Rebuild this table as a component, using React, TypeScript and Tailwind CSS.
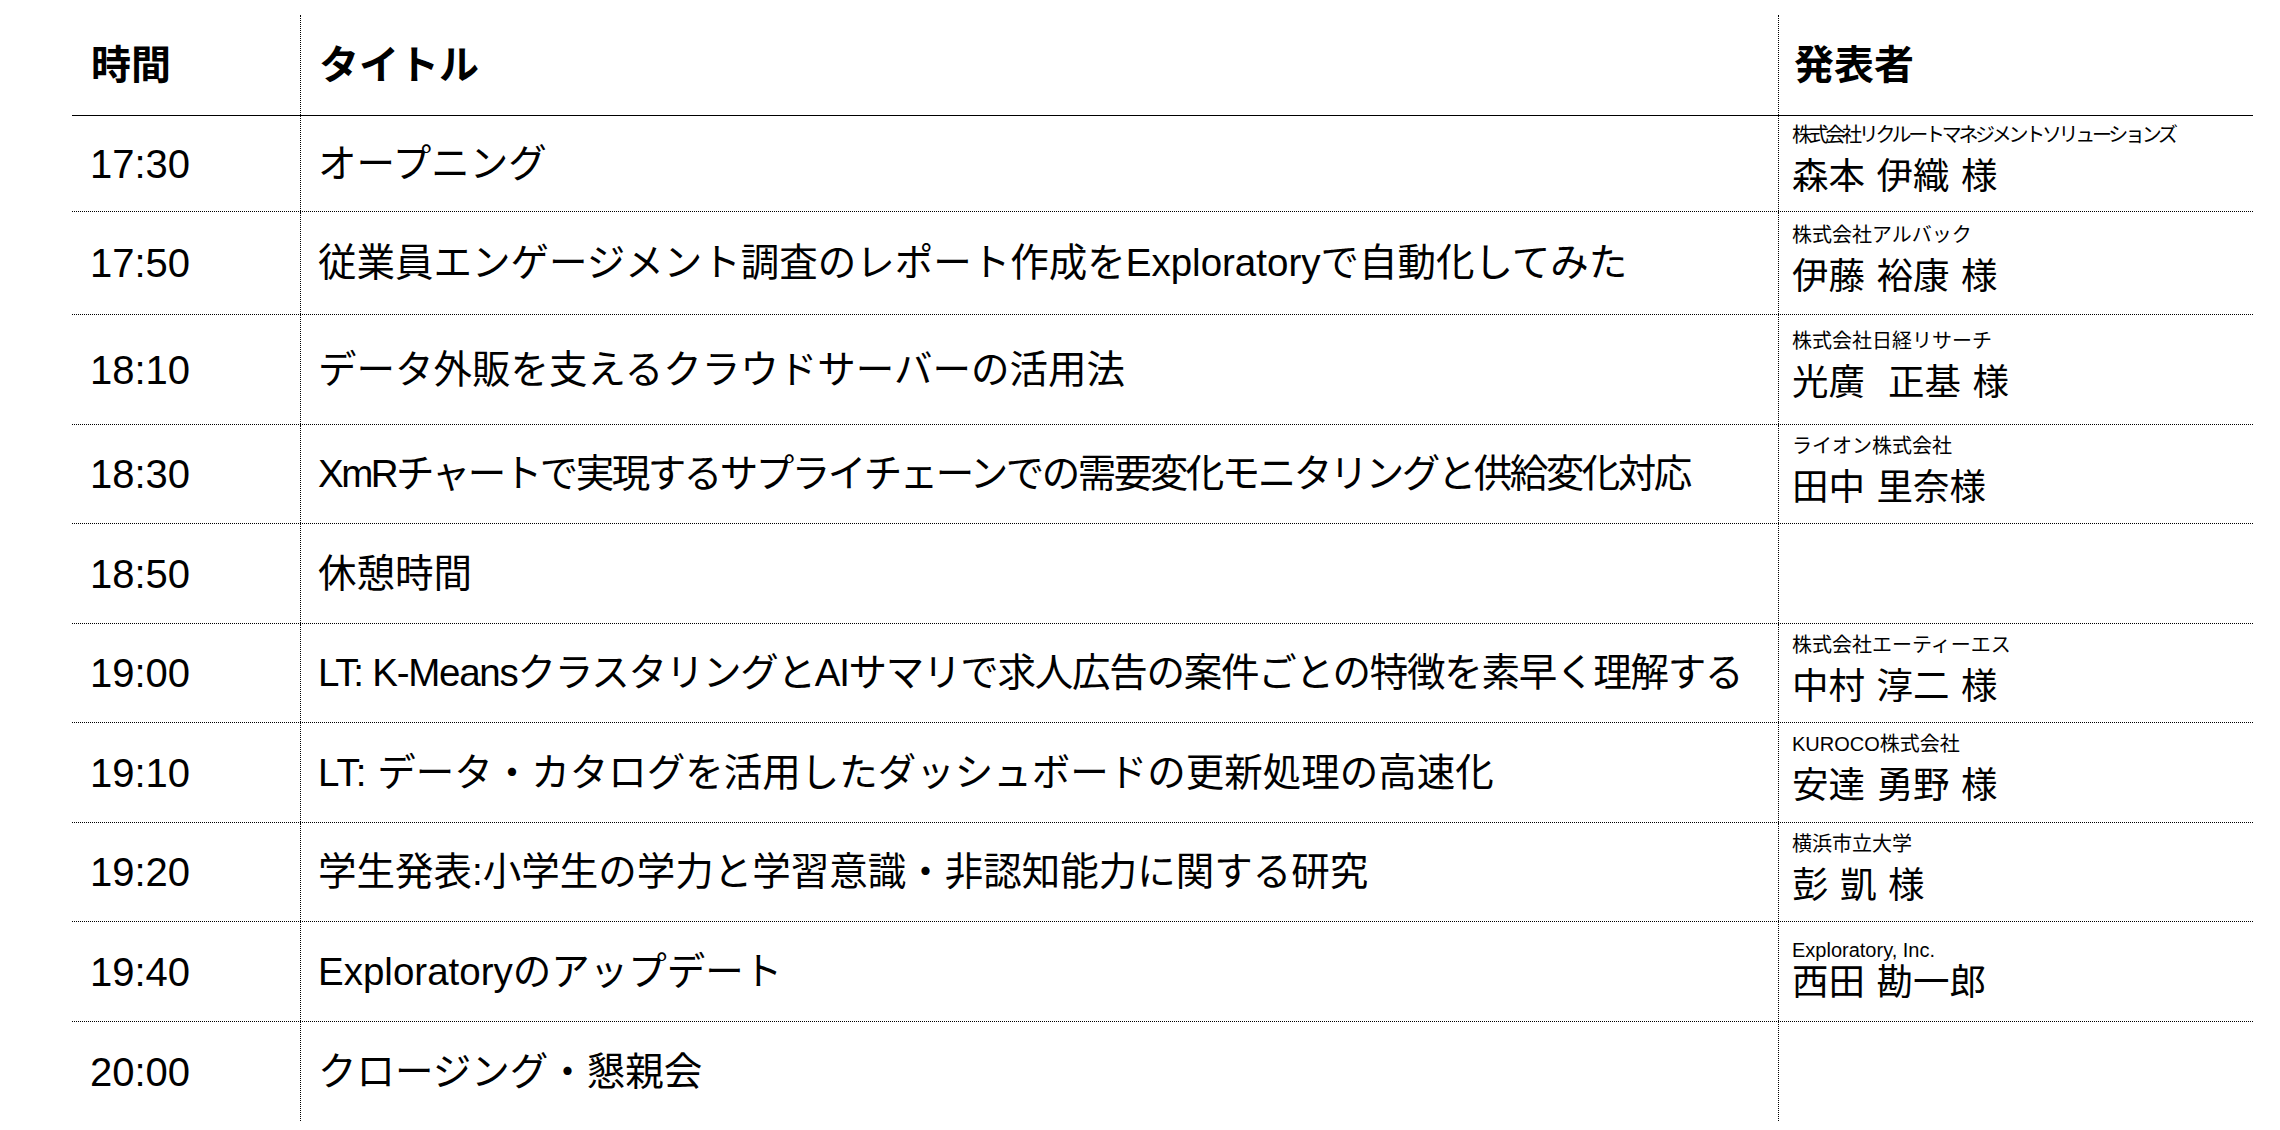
const rows = [
  { time: "17:30", title: "オープニング", org: "株式会社リクルートマネジメントソリューションズ", name: "森本 伊織 様", h: "h-[96px]", tt: "", ot: "tracking-[-3.3px] leading-[27px]", nt: "leading-[56px]" },
  { time: "17:50", title: "従業員エンゲージメント調査のレポート作成をExploratoryで自動化してみた", org: "株式会社アルバック", name: "伊藤 裕康 様", h: "h-[103px]", tt: "", ot: "leading-[27px]", nt: "leading-[56px]" },
  { time: "18:10", title: "データ外販を支えるクラウドサーバーの活用法", org: "株式会社日経リサーチ", name: "光廣  正基 様", h: "h-[110px]", tt: "", ot: "leading-[27px]", nt: "leading-[56px]" },
  { time: "18:30", title: "XmRチャートで実現するサプライチェーンでの需要変化モニタリングと供給変化対応", org: "ライオン株式会社", name: "田中 里奈様", h: "h-[99px]", tt: "tracking-[-2.5px]", ot: "leading-[27px]", nt: "leading-[56px]" },
  { time: "18:50", title: "休憩時間", org: "", name: "", h: "h-[100px]", tt: "", ot: "", nt: "" },
  { time: "19:00", title: "LT: K-MeansクラスタリングとAIサマリで求人広告の案件ごとの特徴を素早く理解する", org: "株式会社エーティーエス", name: "中村 淳二 様", h: "h-[99px]", tt: "tracking-[-1.25px]", ot: "leading-[27px]", nt: "leading-[56px]" },
  { time: "19:10", title: "LT: データ・カタログを活用したダッシュボードの更新処理の高速化", org: "KUROCO株式会社", name: "安達 勇野 様", h: "h-[100px]", tt: "", ot: "leading-[27px]", nt: "leading-[56px]" },
  { time: "19:20", title: "学生発表:小学生の学力と学習意識・非認知能力に関する研究", org: "横浜市立大学", name: "彭 凱 様", h: "h-[99px]", tt: "", ot: "leading-[27px]", nt: "leading-[56px]" },
  { time: "19:40", title: "Exploratoryのアップデート", org: "Exploratory, Inc.", name: "西田 勘一郎", h: "h-[100px]", tt: "", ot: "leading-[22px]", nt: "leading-[44px]" },
  { time: "20:00", title: "クロージング・懇親会", org: "", name: "", h: "h-[99px]", tt: "", ot: "", nt: "" },
];

export default function App() {
  return (
    <div className="w-[2280px] h-[1130px] bg-white text-black overflow-hidden font-['Liberation_Sans','Noto_Sans_CJK_JP',sans-serif]">
      <div className="ml-[72px] mt-[15px] w-[2181px]">
        {/* header */}
        <div className="flex h-[101px] border-b border-black">
          <div className="w-[228px] flex items-center pl-[19px] text-[40px] font-bold">時間</div>
          <div className="w-[1478px] flex items-center pl-[18px] text-[40px] font-bold border-l border-dotted border-black">タイトル</div>
          <div className="flex-1 flex items-center pl-[15px] text-[40px] font-bold border-l border-dotted border-black">発表者</div>
        </div>

        {rows.map((r, i) => (
          <div
            key={r.time}
            className={`flex ${r.h} ${i < rows.length - 1 ? "border-b border-dotted border-black" : ""}`}
          >
            <div className="w-[228px] flex items-center pl-[18px] text-[40px]">{r.time}</div>
            <div className={`w-[1478px] flex items-center pl-[17px] text-[38.5px] whitespace-nowrap border-l border-dotted border-black ${r.tt}`}>
              {r.title}
            </div>
            <div className="flex-1 flex flex-col justify-center pl-[13px] border-l border-dotted border-black whitespace-pre">
              {r.org && <div className={`text-[20px] ${r.ot}`}>{r.org}</div>}
              {r.name && <div className={`text-[36.5px] [word-spacing:1.4px] ${r.nt}`}>{r.name}</div>}
            </div>
          </div>
        ))}
      </div>
    </div>
  );
}
